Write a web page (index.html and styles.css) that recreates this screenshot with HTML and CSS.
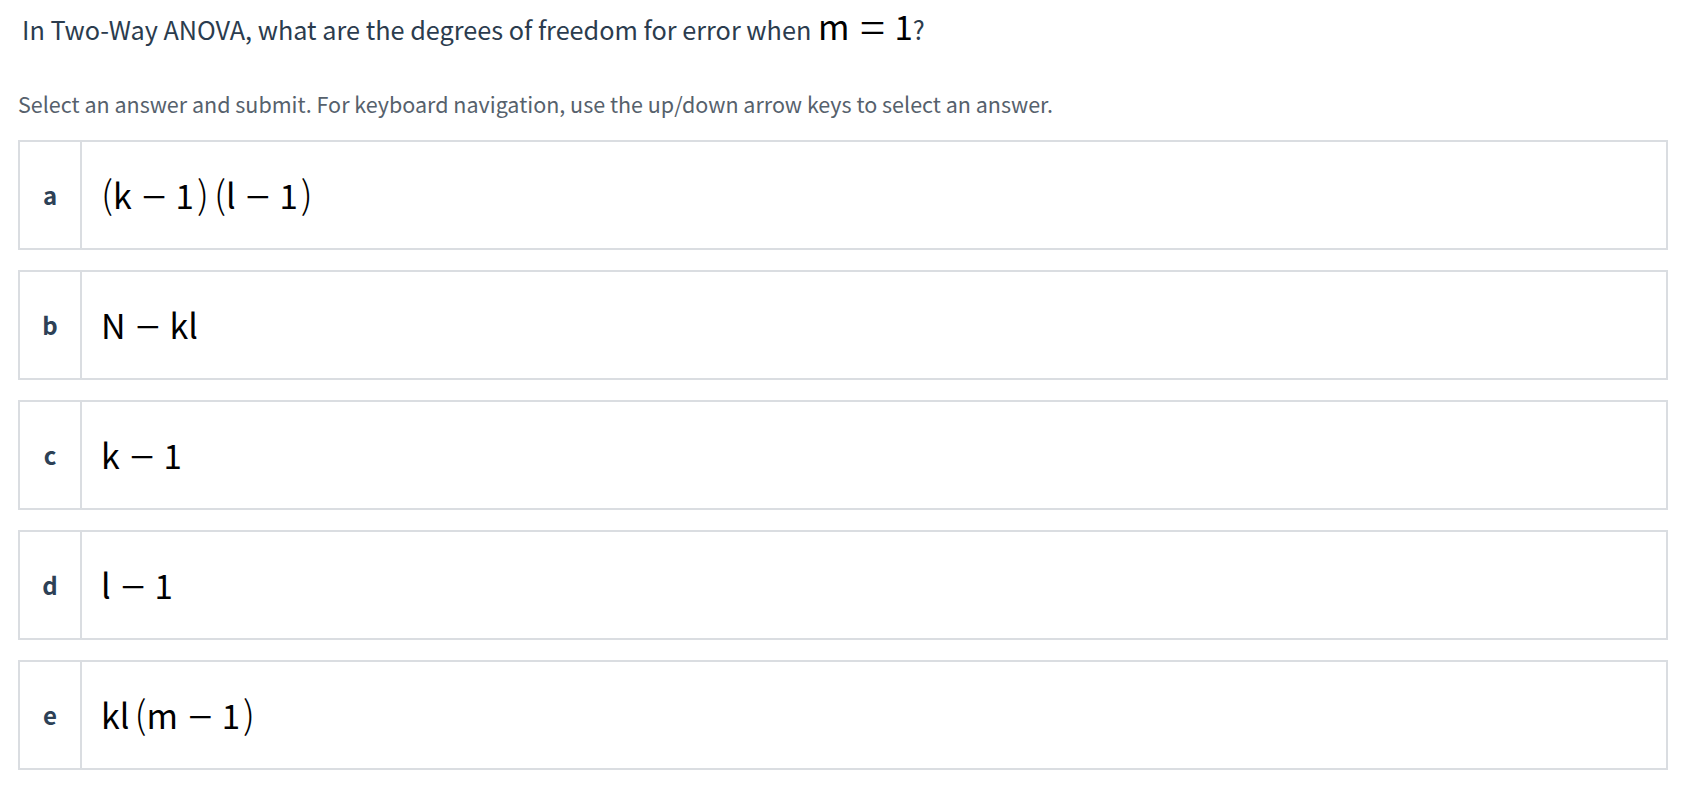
FILE: index.html
```html
<!DOCTYPE html>
<html>
<head>
<meta charset="utf-8">
<link rel="stylesheet" href="styles.css">
</head>
<body>
<div class="page">
  <h1 class="question">In Two-Way ANOVA, what are the degrees of freedom for error when <span class="math">m<span class="rel">=</span><span class="n">1</span></span>?</h1>
  <p class="hint">Select an answer and submit. For keyboard navigation, use the up/down arrow keys to select an answer.</p>
  <div class="options">
    <div class="option"><div class="label">a</div><div class="answer"><span class="math"><span class="p">(</span>k<span class="op">−</span><span class="n">1</span><span class="p pr">)</span><span class="thin"></span><span class="p">(</span>l<span class="op">−</span><span class="n">1</span><span class="p pr">)</span></span></div></div>
    <div class="option"><div class="label">b</div><div class="answer"><span class="math">N<span class="op">−</span>kl</span></div></div>
    <div class="option"><div class="label">c</div><div class="answer"><span class="math">k<span class="op">−</span><span class="n">1</span></span></div></div>
    <div class="option"><div class="label">d</div><div class="answer"><span class="math">l<span class="op">−</span><span class="n">1</span></span></div></div>
    <div class="option"><div class="label">e</div><div class="answer"><span class="math">kl<span class="thin"></span><span class="p">(</span>m<span class="op">−</span><span class="n">1</span><span class="p pr">)</span></span></div></div>
  </div>
</div>
</body>
</html>
```
FILE: styles.css
```css
html, body {
  margin: 0;
  padding: 0;
  background: #ffffff;
}
.page {
  padding: 0 26px 0 18px;
  font-family: "Noto Sans CJK JP", "Noto Sans", sans-serif;
}
.question {
  margin: 0;
  padding: 12px 0 0 4px;
  font-size: 25.25px;
  line-height: 34px;
  font-weight: 400;
  color: #2b3c4e;
}
.hint {
  margin: 44px 0 0 0;
  font-size: 21.5px;
  line-height: 28px;
  color: #56616c;
}
.options {
  display: flex;
  flex-direction: column;
  gap: 20px;
  margin-top: 22px;
}
.option {
  display: flex;
  box-sizing: border-box;
  height: 110px;
  border: 2px solid #dadde1;
}
.label {
  flex: 0 0 60px;
  border-right: 2px solid #dadde1;
  display: flex;
  align-items: center;
  justify-content: center;
  font-size: 24px;
  line-height: 30px;
  font-weight: 700;
  color: #2d4156;
}
.answer {
  display: flex;
  align-items: center;
  padding-left: 19px;
}
.math {
  font-family: "Noto Sans CJK JP", "DejaVu Sans", sans-serif;
  font-size: 34px;
  line-height: 40px;
  color: #000;
}
.math span {
  line-height: 0;
}
.question .math {
  line-height: 0;
  margin-left: 1px;
}
.n {
  font-size: 33px;
}
.p {
  font-size: 38px;
  font-weight: 300;
}
.pr {
  margin-left: 3px;
}
.op {
  font-family: "Liberation Serif", serif;
  font-size: 44px;
  vertical-align: -3px;
  margin: 0 9px 0 10px;
}
.rel {
  font-family: "Liberation Serif", serif;
  font-size: 46px;
  vertical-align: -3px;
  margin: 0 9px 0 10px;
}
.thin {
  display: inline-block;
  width: 5px;
}
```
